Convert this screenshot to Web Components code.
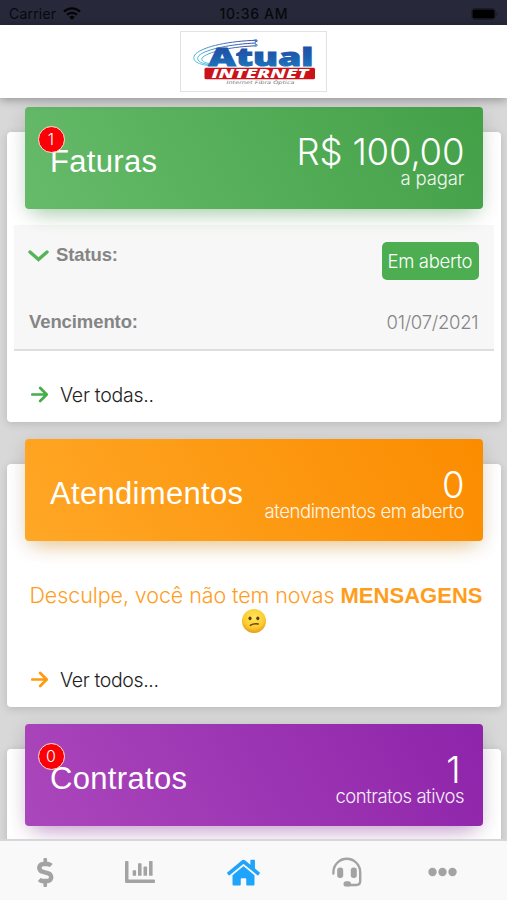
<!DOCTYPE html>
<html lang="pt-BR">
<head>
<meta charset="utf-8">
<title>Atual Internet</title>
<style>
html,body{margin:0;height:100%;overflow:hidden}
body{font-family:"Liberation Sans",Arial,sans-serif;background:#d9d9d9}
</style>
</head>
<body>
<client-app></client-app>
<script>
const define=(name,html,after)=>{
  const t=document.createElement('template');
  t.innerHTML=html;
  customElements.define(name,class extends HTMLElement{
    connectedCallback(){
      if(this.shadowRoot)return;
      this.attachShadow({mode:'open'}).append(t.content.cloneNode(true));
      if(after)after(this,this.shadowRoot);
    }
  });
};

/* A line of text tracked so that it spans a given width. */
define('fit-text',`<style>
:host{display:block;white-space:nowrap}
:host([light]){font-family:Inter,"Liberation Sans",sans-serif;font-weight:300}
span{display:inline-block}
</style><span><slot></slot></span>`,(el,root)=>{
  const s=root.querySelector('span'),n=el.textContent.length,w=+el.getAttribute('w');
  if(!w||n<2)return;
  const ls=(w-s.getBoundingClientRect().width)/(n-1);
  s.style.letterSpacing=ls+'px';
  s.style.marginRight=-ls+'px';
});

define('status-bar',`<style>
:host{display:grid;grid-template-columns:1fr auto 1fr;align-items:center;height:25px;padding:2px 9px 0;box-sizing:border-box;background:#272839;color:#08080d;font:500 14px/20px Inter,"Liberation Sans",sans-serif}
.l{display:flex;align-items:center;gap:7px;font-weight:400}
.t{font-weight:500}
svg{display:block}.r{justify-self:end}
</style>
<div class="l"><fit-text w="47">Carrier</fit-text>
<svg width="18" height="13" viewBox="0 0 18 13" fill="none" stroke="#050508"><path d="M1 4.6a11.6 11.6 0 0 1 16 0" stroke-width="2.3"/><path d="M4 7.8a7.3 7.3 0 0 1 10 0" stroke-width="2.2"/><path d="M9 13L6.2 10a4 4 0 0 1 5.600 0z" fill="#050508" stroke="none"/></svg></div>
<fit-text class="t" w="68">10:36 AM</fit-text>
<svg class="r" width="27" height="12" viewBox="0 0 27 12"><rect x=".7" y=".5" width="23.500" height="11" rx="3" fill="none" stroke="#1b1b28"/><rect x="1.500" y="1.500" width="22" height="9" rx="2" fill="#000"/><path d="M25.300 4v4q1.400-.6 1.400-2t-1.400-2" fill="#1b1b28"/></svg>`);

define('brand-logo',`<style>
:host{display:block;width:147px;height:61px;border:1px solid #e2e2e2;box-sizing:border-box;background:#fff}
svg{display:block}
</style>
<svg width="145" height="59" viewBox="181 32 145 59">
<defs><linearGradient id="b" x1="0" y1="0" x2="0" y2="1"><stop offset="0" stop-color="#2644a0"/><stop offset=".5" stop-color="#1f5cad"/><stop offset="1" stop-color="#1b83c6"/></linearGradient>
<linearGradient id="s" x1="0" y1="1" x2="1" y2="0"><stop offset="0" stop-color="#55cbe4"/><stop offset=".5" stop-color="#4a8fca"/><stop offset="1" stop-color="#3647a0"/></linearGradient></defs>
<g fill="none" stroke="url(#s)" stroke-width="1">
<path d="M256 40.300C231 41 204 46 195.500 54C190.500 60 197 64.500 209 65.500"/>
<path d="M256 43C233 44 206 49 199 55.500C195 60 200 63.500 209 64.500"/>
<path d="M256 45.800C235 46.500 210 51 203 57C200 60 203 62.500 209 63.500"/>
<path d="M254 40h3v1.500h-2v3h2v1.600h-3"/></g>
<g font-family="Open Sans,Liberation Sans,sans-serif" font-weight="800">
<text x="208.500" y="66" font-size="24" textLength="105" lengthAdjust="spacingAndGlyphs" fill="url(#b)" stroke="url(#b)" stroke-width=".9">Atual</text>
<rect x="204.500" y="67.800" width="110.500" height="11.500" rx="1.500" fill="#cb1219"/>
<text x="211.500" y="77.700" font-size="11.600" font-style="italic" textLength="97" lengthAdjust="spacingAndGlyphs" fill="#fff">INTERNET</text></g>
<text x="226.500" y="84.300" font-family="DejaVu Sans,sans-serif" font-style="italic" font-size="4.600" textLength="68" lengthAdjust="spacingAndGlyphs" fill="#777">Internet Fibra Óptica</text>
</svg>`);

define('app-header',`<style>
:host{display:flex;justify-content:center;height:73px;padding-top:6px;box-sizing:border-box;background:#fff;box-shadow:0 2px 9px rgba(0,0,0,.32);position:relative;z-index:1}
</style><brand-logo></brand-logo>`);

define('count-badge',`<style>
:host{display:block;width:27px;height:27px;box-sizing:border-box;border:1.500px solid #fbe6d8;border-radius:50%;background:#fb0007;color:#fff;text-align:center;font:300 16px/25px Inter,"Liberation Sans",sans-serif}
</style><slot></slot>`);

define('summary-card',`<style>
:host{display:flow-root;box-sizing:border-box;background:#fff;border-radius:4px;box-shadow:0 2px 9px rgba(0,0,0,.15)}
.box{position:relative;display:flex;justify-content:space-between;height:102px;box-sizing:border-box;margin:-25px 18.500px 0 18px;padding:0 18px 0 25px;border-radius:4px;color:#fff;background:linear-gradient(60deg,var(--a),var(--b));box-shadow:0 12px 20px -10px var(--s),0 4px 20px rgba(0,0,0,.12)}
::slotted([slot=title]){font-size:31px;line-height:36px;margin-top:36.500px}
.v{display:flex;flex-direction:column;align-items:flex-end;padding-top:var(--vt,29px)}
::slotted([slot=value]){font-size:36.500px;line-height:32px}
::slotted([slot=note]){font-size:18.500px;line-height:20px;opacity:.92}
::slotted([slot=badge]){position:absolute;left:12.500px;top:18.500px}
</style>
<div class="box"><slot name="title"></slot><div class="v"><slot name="value"></slot><slot name="note"></slot></div><slot name="badge"></slot></div><slot></slot>`);

define('invoice-details',`<style>
:host{display:block;margin:16px 7px 0;height:125.500px;box-sizing:border-box;background:#f7f7f7;border-bottom:2px solid #dedede;padding:16.500px 15.500px 0 15px;color:#858585;font-size:18.500px;line-height:20px}
.row{display:flex;justify-content:space-between}
.st{display:flex;gap:6px;padding-top:3px}
b,.st{font-weight:700}
.tag{background:#4cae50;color:#fff;border-radius:5px;width:97px;height:38px;display:flex;align-items:center;justify-content:center}
.two{margin-top:32.500px}
.st svg{display:block;margin-left:-1px;margin-right:1px}
</style>
<div class="row"><div class="st"><svg width="21" height="20" viewBox="0 0 21 20" fill="none" stroke="#55b45a" stroke-width="3.400" stroke-linecap="round" stroke-linejoin="miter"><path d="M2 7l8.500 7.500L19 7"/></svg><fit-text w="62">Status:</fit-text></div><div class="tag"><fit-text light w="85">Em aberto</fit-text></div></div>
<div class="row two"><b><fit-text w="109">Vencimento:</fit-text></b><fit-text light w="92">01/07/2021</fit-text></div>`);

define('more-link',`<style>
:host{display:flex;align-items:center;gap:12px;padding-left:24px;height:24px;font-size:19.500px;line-height:24px;color:#222}
svg{display:block;color:var(--c);position:relative;top:-1px}
</style><svg width="17" height="17" viewBox="0 0 17 17" fill="none" stroke="currentColor" stroke-width="2.700" stroke-linecap="round" stroke-linejoin="round"><path d="M1.300 8.500h14M9.200 2l6.500 6.500L9.200 15"/></svg><slot></slot>`);

define('confused-face',`<style>:host{display:block;width:26px;height:26px}svg{display:block}</style>
<svg width="26" height="26" viewBox="0 0 26 26"><defs><radialGradient id="f" cx=".5" cy=".35" r=".68"><stop offset="0" stop-color="#ffe65c"/><stop offset=".65" stop-color="#fdcb2f"/><stop offset="1" stop-color="#e49216"/></radialGradient></defs><circle cx="13" cy="13" r="12" fill="url(#f)"/><ellipse cx="9" cy="10.300" rx="1.500" ry="1.900" fill="#5a3a10"/><ellipse cx="16.800" cy="10.300" rx="1.500" ry="1.900" fill="#5a3a10"/><path d="M9.300 17.400Q12.500 15.300 17.300 16" fill="none" stroke="#70400a" stroke-width="1.400" stroke-linecap="round"/></svg>`);

define('empty-message',`<style>
:host{display:flex;flex-direction:column;align-items:center;margin-top:41px;padding-left:4px;color:#ff9d1c;font-size:21.500px;line-height:26px}
.l{display:flex;gap:6px;height:26px}
b{font-size:22px;padding-top:1px}
confused-face{margin:0 4px 0 0}
</style><div class="l"><fit-text light w="305">Desculpe, você não tem novas</fit-text><b><fit-text w="142">MENSAGENS</fit-text></b></div><confused-face></confused-face>`);

define('tab-bar',`<style>
:host{position:absolute;left:0;right:0;bottom:0;z-index:2;height:61px;box-sizing:border-box;border-top:2px solid #d6d6d6;background:#f9f9f9;display:grid;grid-template-columns:88px 102px 104.500px 96px 29px;align-items:center;padding:3px 0 0 37px;color:#a3a3a3}
svg{display:block;fill:currentColor}.on{color:#1ea4fb;margin-top:2px}
</style>
<svg width="16.500" height="29" viewBox="0 0 288 512"><path d="M209.200 233.400l-108-31.600C88.700 198.200 80 186.500 80 173.500c0-16.300 13.200-29.500 29.500-29.500h66.300c12.200 0 24.200 3.700 34.200 10.500 6.100 4.100 14.300 3.100 19.500-2l34.800-34c7.100-6.900 6.100-18.400-1.800-24.500C238 74.800 207.400 64.100 176 64V16c0-8.800-7.200-16-16-16h-32c-8.800 0-16 7.200-16 16v48h-2.500C45.800 64-5.400 118.700.5 183.600c4.200 46.100 39.400 83.600 83.800 96.600l102.500 30c12.500 3.700 21.200 15.300 21.200 28.300 0 16.300-13.200 29.500-29.500 29.500h-66.300C100 368 88 364.300 78 357.500c-6.100-4.100-14.300-3.100-19.500 2l-34.800 34c-7.100 6.900-6.100 18.400 1.800 24.500 24.500 19.200 55.100 29.900 86.500 30v48c0 8.800 7.200 16 16 16h32c8.800 0 16-7.200 16-16v-48.200c46.600-.9 90.300-28.600 105.700-72.700 21.500-61.600-14.600-124.800-72.500-141.700z"/></svg>
<svg width="30" height="24" viewBox="0 0 30 24"><path d="M1 1h1.500q1 0 1 1v17.500H29q1 0 1 1V22q0 1-1 1H1.500Q0 23 0 21.500V2q0-1 1-1z"/><rect x="7.700" y="10.300" width="3.400" height="5.500" rx=".6"/><rect x="13" y="3.200" width="3.600" height="12.600" rx=".6"/><rect x="18.500" y="6.500" width="3.600" height="9.300" rx=".6"/><rect x="24" y="1" width="3.600" height="14.800" rx=".6"/></svg>
<svg class="on" width="33" height="29.300" viewBox="0 0 576 512"><path d="M280.370 148.260L96 300.110V464a16 16 0 0 0 16 16l112.060-.29a16 16 0 0 0 15.920-16V368a16 16 0 0 1 16-16h64a16 16 0 0 1 16 16v95.640a16 16 0 0 0 16 16.050L464 480a16 16 0 0 0 16-16V300L295.670 148.260a12.190 12.190 0 0 0-15.300 0zM571.600 251.470L488 182.560V44.050a12 12 0 0 0-12-12h-56a12 12 0 0 0-12 12v72.610L318.470 43a48 48 0 0 0-61 0L4.340 251.470a12 12 0 0 0-1.600 16.900l25.500 31A12 12 0 0 0 45.150 301l235.220-193.740a12.190 12.190 0 0 1 15.300 0L530.900 301a12 12 0 0 0 16.900-1.600l25.500-31a12 12 0 0 0-1.700-16.930z"/></svg>
<svg width="30" height="30" viewBox="0 0 30 30"><path d="M1.400 16.500v-1.300a13.400 13.400 0 0 1 26.800 0V24q0 4-4 4H15" fill="none" stroke="currentColor" stroke-width="2.400" stroke-linecap="round"/><rect x="5.200" y="10.500" width="6" height="10.500" rx="2.700"/><rect x="18.800" y="10.500" width="6" height="10.500" rx="2.700"/><rect x="11.500" y="24.200" width="7.500" height="5.400" rx="2.700"/></svg>
<svg width="29" height="10" viewBox="0 0 29 10"><circle cx="4.500" cy="5" r="4.200"/><circle cx="14.500" cy="5" r="4.200"/><circle cx="24.500" cy="5" r="4.200"/></svg>`);

define('client-app',`<style>
:host{display:flex;flex-direction:column;position:relative;width:507px;height:900px;overflow:hidden;background:#d8d8d8}
main{flex:1;min-height:0;display:flex;flex-direction:column;gap:42px;padding:34px 6px 0 7px;overflow:hidden}
summary-card{flex:none}
.g{--a:#66bb6a;--b:#43a047;--s:rgba(76,175,80,.45);--c:#45ad4a;height:290px}
.o{--a:#ffa726;--b:#fb8c00;--s:rgba(255,152,0,.45);--c:#ff9a0c;--vt:29.500px;height:243px}
.p{--a:#ab47bc;--b:#8e24aa;--s:rgba(156,39,176,.45);--vt:29.500px;height:290px}
.p [slot=value]{margin-right:4px}
.g more-link{margin-top:32.500px}
.o more-link{margin-top:34px}
</style>
<status-bar></status-bar>
<app-header></app-header>
<main>
<summary-card class="g"><fit-text slot="title" w="107">Faturas</fit-text><fit-text slot="value" light w="168">R$ 100,00</fit-text><fit-text slot="note" light w="64">a pagar</fit-text><count-badge slot="badge">1</count-badge>
<invoice-details></invoice-details><more-link><fit-text light w="94">Ver todas..</fit-text></more-link></summary-card>
<summary-card class="o"><fit-text slot="title" w="193">Atendimentos</fit-text><fit-text slot="value" light>0</fit-text><fit-text slot="note" light w="200">atendimentos em aberto</fit-text>
<empty-message></empty-message><more-link><fit-text light w="99">Ver todos...</fit-text></more-link></summary-card>
<summary-card class="p"><fit-text slot="title" w="137">Contratos</fit-text><fit-text slot="value" light>1</fit-text><fit-text slot="note" light w="129">contratos ativos</fit-text><count-badge slot="badge">0</count-badge></summary-card>
</main>
<tab-bar></tab-bar>`);
</script>
</body>
</html>
